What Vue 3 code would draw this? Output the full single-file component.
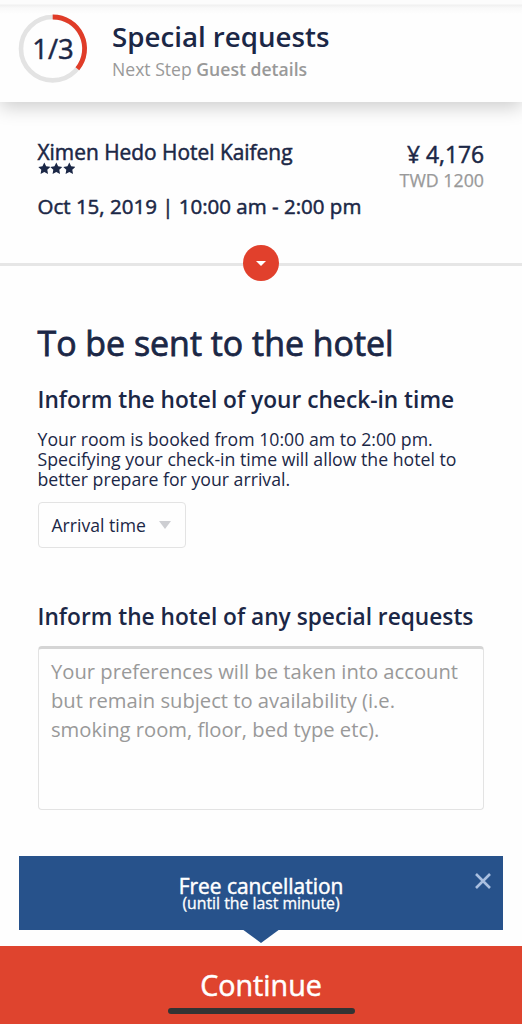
<template>
  <div class="screen">
    <header class="step-header">
      <div class="progress">
        <svg viewBox="0 0 70 70" width="70" height="70">
          <circle cx="34.7" cy="34.7" r="31.7" fill="none" stroke="#e3e3e3" stroke-width="4.6" />
          <path d="M34.7 3 A31.7 31.7 0 0 1 59.4 54.8" fill="none" stroke="#e03c28" stroke-width="4.8" />
        </svg>
        <span class="progress-label medium">{{ step }}/{{ totalSteps }}</span>
      </div>
      <div class="step-text">
        <h1>Special requests</h1>
        <p>Next Step <strong>Guest details</strong></p>
      </div>
    </header>

    <section class="summary">
      <div class="summary-row">
        <div>
          <div class="hotel-name medium">Ximen Hedo Hotel Kaifeng</div>
          <div class="stars">
            <svg v-for="n in 3" :key="n" viewBox="0 0 24 24" width="12.6" height="12.6">
              <path d="M12 1l3.5 7.2 7.9 1.1-5.7 5.5 1.4 7.9L12 19l-7.1 3.7 1.4-7.9L.6 9.3l7.9-1.1z" fill="#1b2746" />
            </svg>
          </div>
        </div>
        <div class="price">
          <div class="price-main medium">¥ 4,176</div>
          <div class="price-local medium">TWD 1200</div>
        </div>
      </div>
      <div class="stay medium">Oct 15, 2019 | 10:00 am - 2:00 pm</div>
    </section>

    <div class="divider">
      <button class="expand" aria-label="Show details">
        <svg viewBox="0 0 12 6" width="10" height="5"><path d="M0 0h12L6 6z" fill="#fff" /></svg>
      </button>
    </div>

    <main class="form">
      <h2>To be sent to the hotel</h2>
      <h3>Inform the hotel of your check-in time</h3>
      <p class="hint">
        Your room is booked from 10:00 am to 2:00 pm.<br />
        Specifying your check-in time will allow the hotel to<br />
        better prepare for your arrival.
      </p>
      <button class="select">
        <span>Arrival time</span>
        <svg viewBox="0 0 12 8" width="12" height="8"><path d="M0 0h12L6 8z" fill="#cdced2" /></svg>
      </button>
      <h3 class="requests-title">Inform the hotel of any special requests</h3>
      <div class="textarea">
        Your preferences will be taken into account<br />
        but remain subject to availability (i.e.<br />
        smoking room, floor, bed type etc).
      </div>
    </main>

    <aside class="notice">
      <div class="notice-title medium">Free cancellation</div>
      <div class="notice-sub medium">(until the last minute)</div>
      <svg class="close" viewBox="0 0 16 16" width="16" height="16">
        <path d="M1 1l14 14M15 1L1 15" stroke="#a9bfe0" stroke-width="2.6" fill="none" />
      </svg>
      <svg class="tip" viewBox="0 0 38 14" width="38" height="14"><path d="M0 0h38L19 14z" fill="#27528b" /></svg>
    </aside>

    <footer class="continue">
      <span class="medium">Continue</span>
      <div class="home-bar"></div>
    </footer>
  </div>
</template>

<script setup>
const step = 1
const totalSteps = 3
</script>

<style>
body {
  margin: 0;
  background: #fefefe;
}
</style>

<style scoped>
* {
  box-sizing: border-box;
}
.screen {
  width: 522px;
  height: 1024px;
  overflow: hidden;
  display: flex;
  flex-direction: column;
  background: #fefefe;
  color: #1b2746;
  font-family: "Open Sans", "Noto Sans", sans-serif;
  font-weight: 400;
}
/* a weight between regular and semibold */
.medium {
  -webkit-text-stroke: 0.5px currentColor;
}
h1, h2, h3, p {
  margin: 0;
}
h1, h2, h3, button {
  color: inherit;
  font-family: inherit;
}
svg {
  display: block;
}
.step-header {
  flex: none;
  height: 102px;
  padding: 14px 18px 0;
  display: flex;
  gap: 24px;
  background: linear-gradient(#fcfcfc 0, #fcfcfc 4px, #f0f0f0 5px, #f9f9f9 8px, #fefefe 14px);
  box-shadow: 0 5px 18px rgba(0, 0, 0, 0.2);
}
.progress {
  display: grid;
  width: 70px;
  height: 70px;
}
.progress > * {
  grid-area: 1 / 1;
}
.progress-label {
  place-self: center;
  font-size: 27.5px;
  line-height: 30px;
}
.step-text h1 {
  margin-top: 4px;
  font-size: 27.7px;
  font-weight: 600;
  line-height: 36px;
}
.step-text p {
  margin-top: 3px;
  color: #999;
  font-size: 17.6px;
  line-height: 24px;
}
.step-text strong {
  font-weight: 600;
}
.summary {
  flex: none;
  height: 161px;
  padding: 37px 38px 0 37.5px;
}
.summary-row {
  display: flex;
  justify-content: space-between;
  height: 54px;
}
.hotel-name {
  font-size: 20.9px;
  line-height: 26px;
}
.stars {
  display: flex;
  margin-top: -3px;
}
.price {
  text-align: right;
}
.price-main {
  margin-top: 2px;
  font-size: 22.8px;
  line-height: 28px;
}
.price-local {
  margin-top: -1px;
  color: #999;
  font-size: 17.8px;
  line-height: 24px;
  -webkit-text-stroke-width: 0.25px;
}
.stay {
  font-size: 20.5px;
  line-height: 26px;
}
.divider {
  flex: none;
  height: 3px;
  background: #e6e6e6;
  display: flex;
  align-items: center;
  justify-content: center;
}
.expand {
  flex: none;
  width: 36px;
  height: 36px;
  margin-top: -3px;
  padding: 0;
  border: 0;
  border-radius: 50%;
  background: #e1402c;
  display: flex;
  align-items: center;
  justify-content: center;
}
.form {
  flex: none;
  height: 590px;
  padding: 54px 38px 0 37.5px;
}
.form h2 {
  font-size: 33.9px;
  font-weight: 400;
  line-height: 46px;
  -webkit-text-stroke: 0.8px currentColor;
}
.form h3 {
  margin-top: 19px;
  font-size: 22.7px;
  font-weight: 600;
  line-height: 30px;
}
.hint {
  margin-top: 14px;
  font-size: 17.7px;
  line-height: 20px;
  white-space: nowrap;
}
.select {
  width: 148.5px;
  height: 46px;
  margin-top: 13px;
  padding: 0 14px 1px 13px;
  border: 1px solid #e3e3e3;
  border-radius: 4px;
  background: #fefefe;
  display: flex;
  align-items: center;
  justify-content: space-between;
  font-size: 17.6px;
  white-space: nowrap;
}
.form .requests-title {
  margin-top: 54px;
  white-space: nowrap;
}
.textarea {
  height: 164px;
  margin-top: 14px;
  padding: 8px 12.5px;
  border: 1px solid #e3e3e3;
  border-top: 3px solid #d5d5d5;
  border-radius: 4px;
  color: #999;
  font-size: 20.2px;
  line-height: 29px;
  white-space: nowrap;
}
.notice {
  position: relative;
  flex: none;
  height: 74px;
  margin: 0 19px;
  padding-top: 18px;
  background: #27528b;
  color: #fff;
  text-align: center;
}
.notice-title {
  font-size: 20.9px;
  line-height: 24px;
}
.notice-sub {
  margin-top: -1px;
  font-size: 15.8px;
  line-height: 12px;
  -webkit-text-stroke-width: 0.3px;
}
.close {
  position: absolute;
  top: 17px;
  right: 12px;
}
.tip {
  position: absolute;
  top: 73px;
  left: 223px;
}
.continue {
  flex: none;
  height: 78px;
  margin-top: 16px;
  padding-top: 20px;
  background: #df442e;
  color: #fff;
  display: flex;
  flex-direction: column;
  align-items: center;
  font-size: 28.7px;
  line-height: 38px;
}
.home-bar {
  width: 187px;
  height: 6px;
  margin-top: 4px;
  border-radius: 3px;
  background: #333;
}
</style>
